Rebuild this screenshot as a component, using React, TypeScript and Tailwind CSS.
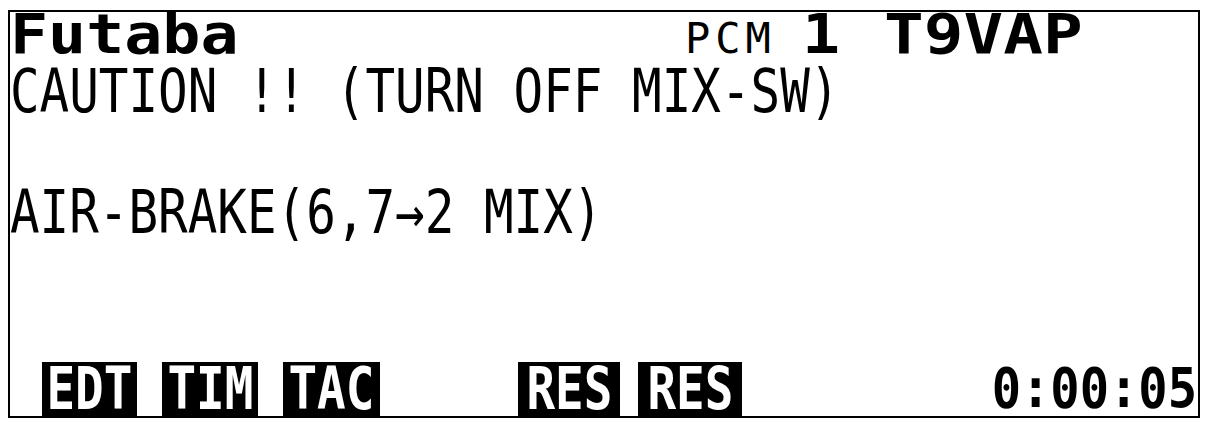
const mono = "font-['DejaVu_Sans_Mono','Liberation_Mono',monospace]"

// soft keys along the bottom edge of the LCD
const keys = [
  { label: 'EDT', w: 'w-[95px]', ml: 'ml-[32px]' },
  { label: 'TIM', w: 'w-[96px]', ml: 'ml-[25px]' },
  { label: 'TAC', w: 'w-[97px]', ml: 'ml-[25px]' },
  { label: 'RES', w: 'w-[102px]', ml: 'ml-[138px]' },
  { label: 'RES', w: 'w-[104px]', ml: 'ml-[18px]' },
]

function SoftKey({ label, w, ml }: { label: string; w: string; ml: string }) {
  return (
    <div className={`${w} ${ml} h-[54px] bg-black flex items-center justify-center overflow-visible`}>
      <span className={`${mono} font-bold text-white text-[58px] leading-none scale-x-[0.82] whitespace-pre`}>
        {label}
      </span>
    </div>
  )
}

export default function App() {
  return (
    <div className="w-[1206px] h-[426px] bg-white overflow-hidden">
      <div className="ml-[8px] mt-[10px] w-[1192px] h-[408px] border-2 border-black flex flex-col text-black">
        {/* header line: brand, modulation, model */}
        <div className={`${mono} h-[44px] flex items-baseline whitespace-pre`}>
          <span className="inline-block w-[229px] font-bold text-[55px] leading-[44px] origin-left scale-x-[1.15]">
            Futaba
          </span>
          <span className="ml-[446px] text-[42px] leading-[44px] tracking-[5px]">PCM</span>
          <span className="ml-[26px] inline-block w-[38px] font-bold text-[55px] leading-[44px] origin-left scale-x-[1.15]">
            1
          </span>
          <span className="ml-[44px] inline-block w-[199px] font-bold text-[55px] leading-[44px] origin-left scale-x-[1.2]">
            T9VAP
          </span>
        </div>

        <div className={`${mono} mt-[5px] h-[60px] text-[60px] leading-none whitespace-pre origin-left scale-x-[0.82]`}>
          CAUTION !! (TURN OFF MIX-SW)
        </div>

        <div className={`${mono} mt-[61px] h-[60px] text-[60px] leading-none whitespace-pre origin-left scale-x-[0.82]`}>
          AIR-BRAKE(6,7→2 MIX)
        </div>

        <div className="mt-auto flex items-end">
          {keys.map((k, i) => (
            <SoftKey key={i} {...k} />
          ))}
          <span className={`${mono} ml-auto mr-[1px] font-bold text-[56px] leading-none whitespace-pre origin-right scale-x-[0.87]`}>
            0:00:05
          </span>
        </div>
      </div>
    </div>
  )
}
